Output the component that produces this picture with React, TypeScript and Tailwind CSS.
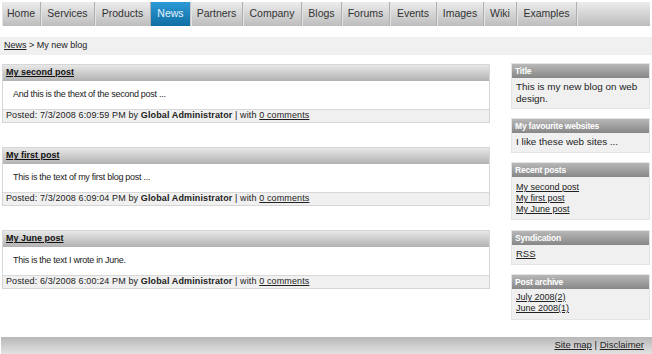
import React from "react";

const tabs = [
  ["Home", 39],
  ["Services", 54],
  ["Products", 56],
  ["News", 40],
  ["Partners", 52],
  ["Company", 59],
  ["Blogs", 40],
  ["Forums", 48],
  ["Events", 47],
  ["Images", 47],
  ["Wiki", 33],
  ["Examples", 60],
] as const;

const posts = [
  {
    title: "My second post",
    body: "And this is the thext of the second post ...",
    date: "7/3/2008 6:09:59 PM",
  },
  {
    title: "My first post",
    body: "This is the text of my first blog post ...",
    date: "7/3/2008 6:09:04 PM",
  },
  {
    title: "My June post",
    body: "This is the text I wrote in June.",
    date: "6/3/2008 6:00:24 PM",
  },
];

function Box({
  title,
  children,
  body,
  className,
}: {
  title: string;
  children: React.ReactNode;
  body: string;
  className?: string;
}) {
  return (
    <div className={"bg-[#f0f0f0] border border-[#e4e4e4] " + (className ?? "")}>
      <div className="h-[14px] bg-gradient-to-b from-[#b8b8b8] to-[#878787] text-white font-bold px-[3px] leading-[14px] text-[8.5px] tracking-[-0.2px]">
        {title}
      </div>
      <div className={"px-[4px] text-[#222] " + body}>{children}</div>
    </div>
  );
}

export default function App() {
  return (
    <div
      className="w-[652px] h-[354px] bg-white overflow-hidden relative text-[9px] text-[#222]"
      style={{ fontFamily: '"Liberation Sans", Arial, sans-serif' }}
    >
      <div className="pt-[2px] px-[2px]">
        <div className="flex h-[24px] bg-gradient-to-b from-[#ececec] to-[#bdbdbd]">
          {tabs.map(([t, w]) => {
            const active = t === "News";
            return (
              <div
                key={t}
                style={{ width: w }}
                className={
                  active
                    ? "flex items-center justify-center text-[10.5px] text-[#e6f4ff] bg-gradient-to-b from-[#2c9ad6] to-[#0f6ea3] border-r border-[#c8c8c8]"
                    : "flex items-center justify-center text-[10.5px] text-[#333] border-r border-[#b0b0b0] shadow-[inset_1px_0_0_#e4e4e4]"
                }
              >
                {t}
              </div>
            );
          })}
          <div className="flex-1 shadow-[inset_1px_0_0_#e4e4e4]" />
        </div>
      </div>

      <div className="mt-[11px] h-[18px] bg-[#f0f0f0] flex items-center px-[4px] text-[9px]">
        <span className="underline">News</span>
        <span>&nbsp;&gt; My new blog</span>
      </div>

      <div className="flex mt-[8px] px-[2px]">
        <div className="w-[488px] mt-[1px] flex flex-col gap-[24px]">
          {posts.map((p) => (
            <div key={p.title} className="border border-[#d6d6d6]">
              <div className="h-[16px] bg-gradient-to-b from-[#e8e8e8] to-[#b2b2b2] flex items-center px-[3px] font-bold underline text-[#111]">
                {p.title}
              </div>
              <div className="h-[28px] bg-white flex items-center px-[10px] tracking-[-0.27px]">{p.body}</div>
              <div className="h-[13px] bg-[#f0f0f0] border-t border-[#d8d8d8] flex items-center px-[3px] tracking-[0.12px]">
                Posted: {p.date} by&nbsp;<b>Global Administrator</b>&nbsp;| with&nbsp;
                <span className="underline">0 comments</span>
              </div>
            </div>
          ))}
        </div>
        <div className="ml-[21px] w-[139px] flex flex-col gap-[9px]">
          <Box title="Title" body="pt-[3px] pb-[3px] text-[9.9px] leading-[12px]">
            <div>This is my new blog on web design.</div>
          </Box>
          <Box title="My favourite websites" body="pt-[3px] pb-[4px] text-[9.9px] leading-[12px]">
            <div>I like these web sites ...</div>
          </Box>
          <Box title="Recent posts" body="pt-[5px] pb-[4px] leading-[11px]">
            <div className="underline">
              <div>My second post</div>
              <div>My first post</div>
              <div>My June post</div>
            </div>
          </Box>
          <Box title="Syndication" className="mt-[1px]" body="pt-[3px] pb-[4px] leading-[12px] text-[9.5px]">
            <div className="underline">RSS</div>
          </Box>
          <Box title="Post archive" body="pt-[3px] pb-[5px] leading-[11px]">
            <div className="underline">
              <div>July 2008(2)</div>
              <div>June 2008(1)</div>
            </div>
          </Box>
        </div>
      </div>

      <div className="absolute left-[1px] right-0 top-[337px] h-[17px] bg-gradient-to-b from-[#b8b8b8] to-[#e2e2e2] flex items-center justify-end pr-[8px] text-[9.5px]">
        <span className="underline">Site map</span>
        <span>&nbsp;|&nbsp;</span>
        <span className="underline">Disclaimer</span>
      </div>
    </div>
  );
}
